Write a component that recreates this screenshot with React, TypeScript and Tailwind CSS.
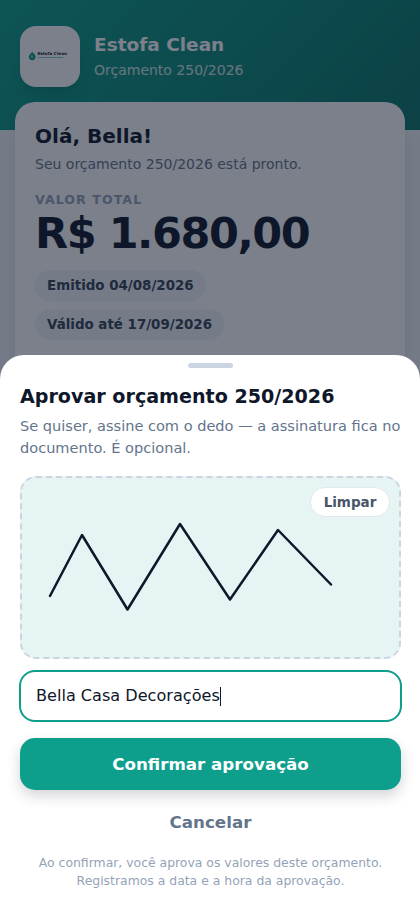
import React, { useState } from "react";

const SIGNATURE_POINTS = "28,118 60,57 105.5,131.5 158,46 208,121.5 256,52 309,106.5";

const BrandLogo: React.FC = () => (
  <div className="flex h-[61px] w-[60px] shrink-0 items-center justify-center rounded-[16px] bg-white pr-1 pb-px shadow-lg">
    <svg viewBox="0 0 40 10" className="h-[10px] w-[40px]">
      <path d="M4.200 .8C5.500 2.400 7.600 3.800 7.600 5.800A3.400 3.400 0 0 1 .8 5.800C.8 3.900 2.900 2.500 4.200 .8Z" fill="#0d9f8c" />
      <path d="M4 4.200v2.800M3.100 5.200l1.800.6" stroke="#b8eadf" strokeWidth="0.600" />
      <text x="9.500" y="4.200" fontSize="4.200" fontWeight="700" fill="#0f172a" textLength="29.500">
        Estofa Clean
      </text>
      <path d="M10 6.500h25.500" stroke="#0d9f8c" strokeWidth="0.700" strokeDasharray="1.300 0.400" />
    </svg>
  </div>
);

const App: React.FC = () => {
  const [name, setName] = useState("Bella Casa Decorações");
  const [signed, setSigned] = useState(true);

  return (
    <div className="relative h-[908px] w-full overflow-hidden bg-[#f1f5f9] font-['DejaVu_Sans',sans-serif] text-[#0f172a]">
      <header className="flex h-[130px] items-start gap-[14px] bg-linear-[135deg,#0d9f8c,#0a7468] px-5 pt-[26px]">
        <BrandLogo />
        <div className="pt-[5px]">
          <h1 className="text-[18.500px] leading-[27px] font-bold text-white">Estofa Clean</h1>
          <p className="text-[14px] leading-[24px] text-white/80">Orçamento 250/2026</p>
        </div>
      </header>

      <main className="relative mx-[15px] -mt-7 h-[300px] rounded-[20px] bg-white px-5 pt-5 shadow-xl">
        <h2 className="text-[20.050px] leading-[28px] font-bold">Olá, Bella!</h2>
        <p className="mt-[3px] text-[14px] leading-[22px] text-[#64748b]">Seu orçamento 250/2026 está pronto.</p>
        <p className="mt-[16px] text-[12.600px] leading-[17px] font-bold tracking-[1.050px] text-[#94a3b8]">VALOR TOTAL</p>
        <p className="text-[43px] leading-[50px] font-bold tracking-[-1.450px]">R$ 1.680,00</p>
        <div className="mt-[12px] flex flex-col items-start gap-2">
          <span className="rounded-full bg-[#f1f6f9] px-3 text-[13.420px] leading-[31px] font-bold text-[#334155]">
            Emitido 04/08/2026
          </span>
          <span className="rounded-full bg-[#f1f6f9] px-3 text-[13.420px] leading-[31px] font-bold text-[#334155]">
            Válido até 17/09/2026
          </span>
        </div>
      </main>

      <div className="absolute inset-0 flex flex-col justify-end bg-[#0f172a]/55">
        <section className="h-[553px] rounded-t-[24px] bg-white pt-[8px] pr-[19px] pl-5">
          <div className="mx-auto h-[5px] w-[45px] rounded-full bg-[#cbd5e1]" />
          <h2 className="mt-[15px] text-[19.100px] leading-[28px] font-bold">Aprovar orçamento 250/2026</h2>
          <p className="mt-1 text-[14.550px] leading-[21.500px] whitespace-nowrap text-[#64748b]">
            Se quiser, assine com o dedo — a assinatura fica no
            <br />
            documento. É opcional.
          </p>

          <div className="relative mt-[18px] h-[183px] rounded-[16px] border-2 border-dashed border-[#cbd5e1] bg-[#e6f5f4]">
            {signed && (
              <svg viewBox="0 0 377 179" className="h-full w-full">
                <polyline
                  points={SIGNATURE_POINTS}
                  fill="none"
                  stroke="#0f172a"
                  strokeWidth="2.500"
                  strokeLinecap="round"
                  strokeLinejoin="round"
                />
              </svg>
            )}
            <button
              type="button"
              onClick={() => setSigned(false)}
              className="absolute top-[9px] right-[9px] h-[30px] w-[80px] rounded-full border border-[#e2e8f0] bg-white text-[13.500px] font-bold text-[#475569]"
            >
              Limpar
            </button>
          </div>

          <div className="-mx-px mt-[11px] flex h-[52px] items-center rounded-[16px] border-2 border-[#0d9f8c] px-[15px]">
            <input
              value={name}
              onChange={(e) => setName(e.target.value)}
              className="field-sizing-content pt-px text-[16.100px] outline-none"
            />
            <span className="h-[19px] w-px bg-[#0f172a]" />
          </div>

          <button
            type="button"
            className="mt-4 h-[52px] w-full rounded-[15px] bg-[#0d9f8c] pt-px text-[16.700px] font-bold text-white shadow-[0_6px_14px_rgba(15,23,42,0.18)]"
          >
            Confirmar aprovação
          </button>
          <button type="button" className="mt-[8px] h-12 w-full pt-px text-[16.700px] font-bold text-[#64748b]">
            Cancelar
          </button>
          <p className="mt-[8px] text-center text-[12.420px] leading-[17.500px] text-[#94a3b8]">
            Ao confirmar, você aprova os valores deste orçamento.
            <br />
            Registramos a data e a hora da aprovação.
          </p>
        </section>
      </div>
    </div>
  );
};

export default App;
